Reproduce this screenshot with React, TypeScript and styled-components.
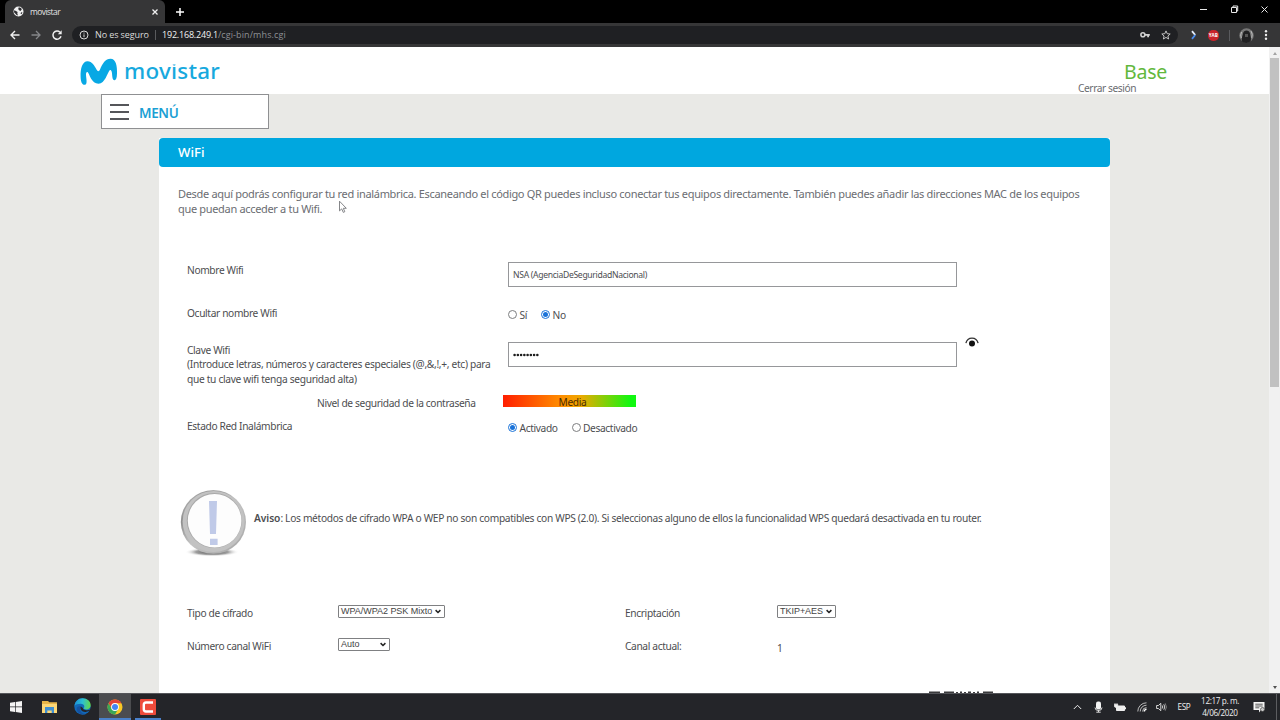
import React from 'react';
import styled, { createGlobalStyle } from 'styled-components';

const GlobalStyle = createGlobalStyle`
  * { box-sizing: border-box; }
  body { margin: 0; overflow: hidden; background: #000; }
`;

const uiFont = `'Open Sans', 'Noto Sans', sans-serif`;
const siteFont = `'Noto Sans', 'Open Sans', sans-serif`;

const Screen = styled.div`
  position: relative;
  width: 1280px;
  height: 720px;
  display: flex;
  flex-direction: column;
  overflow: hidden;
  font-family: ${siteFont};
`;

/* ---------- browser chrome ---------- */
const TabStrip = styled.div`
  height: 23px;
  flex: none;
  display: flex;
  align-items: center;
  padding-left: 5px;
  background: #000;
`;
const Tab = styled.div`
  width: 160px;
  height: 23px;
  display: flex;
  align-items: center;
  gap: 6px;
  padding: 0 6px 0 8px;
  border-radius: 6px 6px 0 0;
  background: #363637;
  color: #e4e4e4;
  font: 8.4px/12px ${uiFont};
  letter-spacing: -0.5px;
`;
const TabTitle = styled.span`
  flex: 1;
`;
const NewTab = styled.div`
  display: flex;
  margin-left: 9px;
`;
const WindowButtons = styled.div`
  margin-left: auto;
  display: flex;
  align-items: center;
  gap: 21px;
  padding: 0 11px 4px 0;
`;
const Toolbar = styled.div`
  height: 24px;
  flex: none;
  display: flex;
  align-items: center;
  background: #363637;
`;
const NavButtons = styled.div`
  width: 72px;
  display: flex;
  align-items: center;
  gap: 9px;
  padding-left: 9px;
`;
const AddressBar = styled.div`
  width: 1106px;
  height: 18px;
  display: flex;
  align-items: center;
  padding: 0 7px;
  border-radius: 9px;
  background: #1f2023;
  color: #dcdcdc;
  font: 9px/14px ${uiFont};
  svg { flex: none; }
`;
const Security = styled.span`
  width: 60px;
  margin-left: 6px;
  letter-spacing: -0.1px;
  white-space: nowrap;
`;
const Divider = styled.span<{ $h: number }>`
  width: 1px;
  height: ${(p) => p.$h}px;
  background: #5a5b5e;
`;
const Host = styled.span`
  margin-left: 6px;
  color: #f2f2f2;
  letter-spacing: -0.2px;
`;
const UrlPath = styled.span`
  flex: 1;
  color: #8e9094;
  letter-spacing: 0.1px;
`;
const BarIcons = styled.div`
  display: flex;
  gap: 11px;
  align-items: center;
`;
const Extensions = styled.div`
  flex: 1;
  display: flex;
  align-items: center;
  justify-content: space-between;
  padding: 0 12px 0 11px;
`;
const Blocker = styled.span`
  width: 11px;
  height: 11px;
  border-radius: 5px;
  background: #c9242b;
  color: #fff;
  font: bold 4.6px/11px ${uiFont};
  text-align: center;
`;

/* ---------- page ---------- */
const Viewport = styled.div`
  height: 646px;
  flex: none;
  display: flex;
  overflow: hidden;
`;
const Page = styled.div`
  width: 1269px;
  background: #e9e9e6;
`;
const Header = styled.header`
  height: 47px;
  display: flex;
  justify-content: space-between;
  padding: 0 102px 0 80px;
  background: #fff;
`;
const Brand = styled.div`
  display: flex;
  padding-top: 11px;
`;
/* The brand lettering has a dotless i: the strip above the t is clipped away. */
const Wordmark = styled.div`
  height: 30px;
  margin: -2px 0 0 6px;
  clip-path: inset(8.6px 0 0 0);
  color: #17a9de;
  font: 500 22.4px/30px ${siteFont};
  letter-spacing: 0.25px;
`;
const Account = styled.div`
  width: 89px;
  display: flex;
  flex-direction: column;
`;
const Level = styled.div`
  align-self: flex-end;
  margin-top: 12px;
  color: #62b83c;
  font-size: 19.5px;
  line-height: 26px;
  letter-spacing: -0.25px;
`;
const Logout = styled.a`
  margin-top: -4px;
  color: #6a6c70;
  font-size: 10.2px;
  line-height: 14px;
  letter-spacing: -0.42px;
`;
const MenuButton = styled.div`
  width: 168px;
  height: 35px;
  display: flex;
  align-items: center;
  gap: 10px;
  margin-left: 101px;
  padding: 3px 0 0 8px;
  border: 1px solid #8f9092;
  background: #fff;
  color: #1b9fd4;
  font-size: 13.5px;
  font-weight: 600;
  letter-spacing: -0.35px;
`;
const Bars = styled.span`
  width: 19px;
  height: 16px;
  margin-top: -2px;
  border: solid #55565a;
  border-width: 2px 0;
  display: flex;
  align-items: center;
  &::after { content: ''; width: 19px; height: 2px; background: #55565a; }
`;
const Card = styled.main`
  width: 951px;
  height: 555px;
  margin: 8.5px 0 0 159px;
  background: #fff;
`;
const CardTitle = styled.h1`
  height: 29px;
  margin: 0;
  padding-left: 19px;
  border-radius: 4px;
  background: #00a7df;
  color: #fff;
  font-size: 13.2px;
  font-weight: 500;
  line-height: 29px;
`;
const CardBody = styled.div`
  padding-left: 28px;
  color: #4c4d50;
  font-size: 10.2px;
  line-height: 14.6px;
  letter-spacing: -0.36px;
`;
const Intro = styled.p`
  margin: 0 0 0 -9px;
  padding-top: 20.5px;
  height: 50px;
  white-space: nowrap;
  color: #6b6d72;
  font-size: 11px;
  line-height: 14.7px;
  letter-spacing: -0.325px;
`;
const Row = styled.div<{ $gap: number; $h: number }>`
  display: flex;
  height: ${(p) => p.$h}px;
  margin-top: ${(p) => p.$gap}px;
`;
const Label = styled.div<{ $w?: number; $top?: number; $indent?: number }>`
  flex: none;
  width: ${(p) => p.$w ?? 321}px;
  padding: ${(p) => p.$top ?? 0}px 0 0 ${(p) => p.$indent ?? 0}px;
  white-space: nowrap;
`;
const Hint = styled.div`
  letter-spacing: -0.31px;
`;
const TextField = styled.div`
  width: 449px;
  height: 25px;
  padding: 0 0 1px 4px;
  border: 1px solid #96979a;
  font-size: 8.6px;
  line-height: 24px;
  letter-spacing: -0.31px;
`;
const Password = styled.div`
  display: flex;
  align-items: center;
  gap: 0.7px;
  height: 23px;
`;
const DotRow = styled.svg`
  display: block;
`;
const EyeButton = styled.span`
  margin: -5px 0 0 8px;
`;
const RadioGroup = styled.div`
  display: flex;
  align-items: center;
  height: 21px;
`;
const RadioOption = styled.label<{ $w: number }>`
  width: ${(p) => p.$w}px;
  display: flex;
  align-items: center;
  gap: 2.5px;
  white-space: nowrap;
`;
const Radio = styled.span<{ $on?: boolean }>`
  flex: none;
  width: 9px;
  height: 9px;
  margin-top: -2px;
  border: 1px solid ${(p) => (p.$on ? '#1a73d9' : '#7d7e80')};
  border-radius: 50%;
  background: ${(p) => (p.$on ? '#1a73d9' : '#fff')};
  background-clip: content-box;
  padding: 1px;
`;
const Strength = styled.div`
  width: 133px;
  height: 12px;
  margin-top: 1px;
  padding-left: 6px;
  background: linear-gradient(90deg, #ff1e00, #ff8a00 42%, #f0a800 58%, #10f810 96%);
  color: #4a2c00;
  line-height: 14px;
  text-align: center;
`;
const Notice = styled.div`
  display: flex;
  height: 70px;
  margin: 52px 0 0 -7px;
  white-space: nowrap;
  letter-spacing: -0.315px;
`;
const NoticeText = styled.p`
  margin: 22px 0 0 8px;
`;
const Strong = styled.strong`
  letter-spacing: -0.05px;
  font-weight: 600;
`;
const SelectBox = styled.div<{ $w: number }>`
  width: ${(p) => p.$w}px;
  height: 13px;
  display: flex;
  align-items: center;
  justify-content: space-between;
  padding: 0 3px 0 2px;
  border: 1px solid #7f8082;
  border-radius: 1px;
  color: #444;
  font: 9px/11px 'Liberation Sans', Arial, sans-serif;
  letter-spacing: -0.03px;
  white-space: nowrap;
`;
const Cell = styled.div<{ $w: number }>`
  flex: none;
  width: ${(p) => p.$w}px;
`;
const Scrollbar = styled.div`
  width: 11px;
  display: flex;
  flex-direction: column;
  align-items: center;
  background: #f1f1f1;
`;
const Thumb = styled.div`
  width: 9px;
  height: 329px;
  margin-bottom: auto;
  background: #c1c1c1;
`;
const ScrollArrow = styled.span<{ $down?: boolean }>`
  display: block;
  margin: ${(p) => (p.$down ? '0 0 4px' : '5px 0 3px')};
  border: solid transparent;
  border-width: 0 2px;
  ${(p) => (p.$down ? 'border-top: 3px solid #505050;' : 'border-bottom: 3px solid #a3a3a3;')}
`;
const Pointer = styled.svg`
  position: absolute;
  left: 338px;
  top: 200px;
`;

/* ---------- taskbar ---------- */
const Taskbar = styled.footer`
  flex: 1;
  display: flex;
  border-top: 1px solid #55565a;
  background: #242529;
  color: #efefef;
  font: 8.2px/12.5px ${uiFont};
`;
const TaskButton = styled.div<{ $w: number; $active?: boolean; $open?: boolean }>`
  width: ${(p) => p.$w}px;
  display: flex;
  align-items: center;
  justify-content: center;
  padding-top: 1px;
  background: ${(p) => (p.$active ? '#4b4c4f' : 'transparent')};
  border-bottom: ${(p) => (p.$open ? '2px solid #4a80c9' : '2px solid transparent')};
`;
const Tray = styled.div`
  margin-left: auto;
  display: flex;
  align-items: center;
`;
const TrayItem = styled.span<{ $w: number }>`
  width: ${(p) => p.$w}px;
  display: flex;
  justify-content: center;
  letter-spacing: -0.4px;
`;
const Clock = styled.div`
  width: 44px;
  margin-right: 3px;
  text-align: center;
  letter-spacing: -0.38px;
  white-space: nowrap;
`;
const ShowDesktop = styled.div`
  width: 4px;
  height: 26px;
  margin-left: 4px;
  border-left: 1px solid #5c5d60;
`;

const Select = ({ w, children }: { w: number; children: React.ReactNode }) => (
  <SelectBox $w={w}>
    {children}
    <svg width="6" height="5" viewBox="0 0 6 5" fill="none" stroke="#222" strokeWidth="1.5">
      <path d="M.6 1.1 3 3.5 5.4 1.1" />
    </svg>
  </SelectBox>
);

const BrandMark = () => (
  <svg width="38" height="28" viewBox="80 58 38 28" fill="#08a8e4">
    <path d="M84.800 84.800C82 85 80.800 82 80.600 77 80.300 68 82.500 61.500 87.500 61.300 92 61.200 94.500 66 96.500 69.500 97.800 71.800 99 71.800 100 69.500 102.500 63.500 105.500 58.800 110.500 58.800 116 58.800 117.200 66 117 73.500 116.900 78 116 80.500 114.300 80.300 112.500 80 112.300 77 112 73.500 111.800 71 110.800 69.300 109.500 70.500 107.500 72.500 105 83.800 98.500 83.800 91.500 83.800 89.500 74 87.800 72.300 86.800 71.300 86 72.500 86 74.500 86 78 88 84.500 84.800 84.800Z" />
  </svg>
);

const WarningBadge = () => (
  <svg width="66" height="70" viewBox="180 489 66 70">
    <defs>
      <linearGradient id="ring" x1="0" y1="0" x2="1" y2="1">
        <stop offset="0" stopColor="#c9c9c9" />
        <stop offset=".25" stopColor="#8f8f8f" />
        <stop offset=".5" stopColor="#c4c4c4" />
        <stop offset="1" stopColor="#a4a4a4" />
      </linearGradient>
      <radialGradient id="shade">
        <stop offset="0" stopColor="#444" />
        <stop offset=".6" stopColor="#777" stopOpacity=".7" />
        <stop offset="1" stopColor="#fff" stopOpacity="0" />
      </radialGradient>
    </defs>
    <ellipse cx="212" cy="552" rx="27" ry="4.5" fill="url(#shade)" />
    <ellipse cx="213.4" cy="522" rx="32.6" ry="31.8" fill="url(#ring)" />
    <ellipse cx="213.6" cy="521.500" rx="31" ry="30.500" fill="#c2c2c2" />
    <circle cx="214.3" cy="520.5" r="27.500" fill="#a9a9a9" />
    <circle cx="214.6" cy="520.7" r="26.800" fill="#fdfdfd" />
    <path d="M209 501h8l-1 33h-6zM210 538.7h7.6v6.3H210z" fill="#c0cae8" />
  </svg>
);

export default function App() {
  return (
    <Screen>
      <GlobalStyle />
      <TabStrip>
        <Tab>
          <svg width="11" height="11" viewBox="0 0 11 11">
            <circle cx="5.5" cy="5.5" r="5" fill="#f1f1f1" />
            <path d="M1.2 4.2 3 5l1.6 1-.3 1.4L5 9.6 3.6 9 1 6.2zM5.8 1.3 8 2l.8 1.2L7.6 5 6 4.3l-.8-1.2zM8.2 6.2l1.3.3-1 1.8-1-.7z" fill="#303033" />
          </svg>
          <TabTitle>movistar</TabTitle>
          <svg width="8" height="8" viewBox="0 0 8 8" stroke="#f0f0f0" strokeWidth="1.3"><path d="m1.5 1.5 5 5m0-5-5 5" /></svg>
        </Tab>
        <NewTab>
          <svg width="12" height="10" viewBox="0 0 12 10" stroke="#fff" strokeWidth="1.5"><path d="M6 1v8M2 5h8" /></svg>
        </NewTab>
        <WindowButtons>
          <svg width="12" height="9" viewBox="0 0 12 9" stroke="#e8e8e8"><path d="M3 4.5h7" /></svg>
          <svg width="9" height="9" viewBox="0 0 9 9" fill="none" stroke="#e8e8e8"><path d="M1.5 2.5h5v5h-5zM3 2.5V1h4.7v5H6.5" /></svg>
          <svg width="9" height="9" viewBox="0 0 9 9" stroke="#e8e8e8"><path d="m1.5 1.5 6 6m0-6-6 6" /></svg>
        </WindowButtons>
      </TabStrip>
      <Toolbar>
        <NavButtons>
          <svg width="12" height="12" viewBox="0 0 12 12" fill="none" stroke="#f0f0f0" strokeWidth="1.4"><path d="M10.5 6H2m4-4L2 6l4 4" /></svg>
          <svg width="12" height="12" viewBox="0 0 12 12" fill="none" stroke="#858689" strokeWidth="1.3"><path d="M1.5 6H10M6 2l4 4-4 4" /></svg>
          <svg width="12" height="12" viewBox="0 0 12 12" fill="none" stroke="#f0f0f0" strokeWidth="1.5"><path d="M10 7.3A4.1 4.1 0 1 1 9 3.2" /><path d="M10.7 1.2v4H6.8z" fill="#f0f0f0" stroke="none" /></svg>
        </NavButtons>
        <AddressBar>
          <svg width="10" height="10" viewBox="0 0 10 10" fill="none" stroke="#d8d8d8"><circle cx="5" cy="5" r="4" /><path d="M5 4.4v2.8M5 2.6v1" /></svg>
          <Security>No es seguro</Security>
          <Divider $h={10} />
          <Host>192.168.249.1</Host>
          <UrlPath>/cgi-bin/mhs.cgi</UrlPath>
          <BarIcons>
            <svg width="10" height="8" viewBox="0 0 10 8"><circle cx="2.9" cy="3.8" r="2" fill="none" stroke="#d0d0d0" strokeWidth="1.6" /><path d="M5 3h4.8v1.7H9v1.5H7.2V4.7H5z" fill="#d0d0d0" /></svg>
            <svg width="10" height="10" viewBox="0 0 10 10" fill="none" stroke="#d0d0d0" strokeWidth=".9"><path d="m5 .9 1.2 2.8 3 .3-2.3 2 .7 3L5 7.4 2.4 9l.7-3L.8 4l3-.3z" /></svg>
          </BarIcons>
        </AddressBar>
        <Extensions>
          <svg width="9" height="10" viewBox="0 0 9 10" fill="none" strokeWidth="1.8"><path d="M3 1.2 6.2 5" stroke="#e8f0fc" /><path d="M6.2 5 3 8.8" stroke="#4a8df0" /></svg>
          <Blocker>YAB</Blocker>
          <Divider $h={11} />
          <svg width="15" height="15" viewBox="0 0 15 15"><circle cx="7.5" cy="7.5" r="7.2" fill="#777" /><path d="M3 13.5C2 9 4 8 4 5.5 4.5 1.5 10.5 1.5 11 5.5c.3 2.5 1.6 4 .6 7.8A7.2 7.2 0 0 1 3 13.5z" fill="#202022" /><path d="M12 3q2 3 .7 6.8M2.6 4Q1 7 2.3 10" stroke="#bbb" fill="none" /><path d="M6 6h3v3H6z" fill="#555" /></svg>
          <svg width="4" height="12" viewBox="0 0 4 12" fill="#eee"><circle cx="2" cy="2.2" r="1.2" /><circle cx="2" cy="6" r="1.2" /><circle cx="2" cy="9.8" r="1.2" /></svg>
        </Extensions>
      </Toolbar>

      <Viewport>
        <Page>
          <Header>
            <Brand>
              <BrandMark />
              <Wordmark>movistar</Wordmark>
            </Brand>
            <Account>
              <Level>Base</Level>
              <Logout>Cerrar sesión</Logout>
            </Account>
          </Header>
          <MenuButton><Bars />MENÚ</MenuButton>
          <Card>
            <CardTitle>WiFi</CardTitle>
            <CardBody>
              <Intro>
                Desde aquí podrás configurar tu red inalámbrica. Escaneando el código QR puedes incluso conectar tus equipos directamente. También puedes añadir las direcciones MAC de los equipos
                <br />
                que puedan acceder a tu Wifi.
              </Intro>
              <Row $gap={45.5} $h={25}>
                <Label $top={1}>Nombre Wifi</Label>
                <TextField>NSA (AgenciaDeSeguridadNacional)</TextField>
              </Row>
              <Row $gap={18} $h={19}>
                <Label $top={1}>Ocultar nombre Wifi</Label>
                <RadioGroup>
                  <RadioOption $w={33}><Radio />Sí</RadioOption>
                  <RadioOption $w={40}><Radio $on />No</RadioOption>
                </RadioGroup>
              </Row>
              <Row $gap={18} $h={45}>
                <Label $top={0.8}>
                  Clave Wifi
                  <Hint>(Introduce letras, números y caracteres especiales (@,&amp;,!,+, etc) para<br />que tu clave wifi tenga seguridad alta)</Hint>
                </Label>
                <TextField>
                  <Password>
                    <DotRow width="26" height="4" viewBox="0 0 26 4" fill="#1c1c1c">
                      {Array.from({ length: 8 }, (_, i) => <circle key={i} cx={1.6 + i * 3.25} cy="2" r="1.3" />)}
                    </DotRow>
                  </Password>
                </TextField>
                <EyeButton>
                  <svg width="14" height="11" viewBox="0 0 14 11"><path d="M.9 6.2C2.5-.6 11.5-.6 13.1 6.2" fill="none" stroke="#333" strokeWidth="1.3" /><circle cx="7" cy="6.6" r="3" fill="#111" /></svg>
                </EyeButton>
              </Row>
              <Row $gap={7} $h={15}>
                <Label $w={316} $indent={130} $top={2}>Nivel de seguridad de la contraseña</Label>
                <Strength>Media</Strength>
              </Row>
              <Row $gap={9} $h={19}>
                <Label $top={1}>Estado Red Inalámbrica</Label>
                <RadioGroup>
                  <RadioOption $w={63.5}><Radio $on />Activado</RadioOption>
                  <RadioOption $w={70}><Radio />Desactivado</RadioOption>
                </RadioGroup>
              </Row>
              <Notice>
                <WarningBadge />
                <NoticeText>
                  <Strong>Aviso</Strong>: Los métodos de cifrado WPA o WEP no son compatibles con WPS (2.0). Si seleccionas alguno de ellos la funcionalidad WPS quedará desactivada en tu router.
                </NoticeText>
              </Notice>
              <Row $gap={46} $h={16}>
                <Label $w={151} $top={1}>Tipo de cifrado</Label>
                <Cell $w={287}><Select w={107}>WPA/WPA2 PSK Mixto</Select></Cell>
                <Label $w={152} $top={1}>Encriptación</Label>
                <Select w={59}>TKIP+AES</Select>
              </Row>
              <Row $gap={17} $h={17}>
                <Label $w={151} $top={1}>Número canal WiFi</Label>
                <Cell $w={287}><Select w={52}>Auto</Select></Cell>
                <Label $w={152} $top={1}>Canal actual:</Label>
                <Label $w={20} $top={3}>1</Label>
              </Row>
              <Row $gap={36} $h={3}>
                <Cell $w={741} />
                <svg width="68" height="2" viewBox="0 0 68 2" fill="#3a3a3c"><path d="M1 .5h11V2H1zM16 .5h10V2H16zM28 1h2v1h-2zM32 .5h2V2h-2zM36 1h2v1h-2zM40 .5h3V2h-3zM45 1h2v1h-2zM49 .5h2V2h-2zM55 .5h10V2H55z" /></svg>
              </Row>
            </CardBody>
          </Card>
        </Page>
        <Scrollbar>
          <ScrollArrow />
          <Thumb />
          <ScrollArrow $down />
        </Scrollbar>
      </Viewport>

      <Taskbar>
        <TaskButton $w={32}>
          <svg width="12" height="12" viewBox="0 0 12 12" fill="#f4f4f4"><path d="M0 1.8 5 1v4.6H0zM5.7.9 12 0v5.6H5.7zM0 6.3h5V11l-5-.8zM5.7 6.3H12V12l-6.300-.9z" /></svg>
        </TaskButton>
        <TaskButton $w={34}>
          <svg width="15" height="14" viewBox="0 0 15 14"><path d="M0 1h6l1.3 1.2H15V13H0z" fill="#e7b549" /><path d="M0 4h15v9H0z" fill="#fbd777" /><path d="M3 7h9v6h-2.3v-2.6H5.3V13H3z" fill="#3f8fd2" /></svg>
        </TaskButton>
        <TaskButton $w={33}>
          <svg width="17" height="17" viewBox="0 0 17 17">
            <defs><linearGradient id="edge" x1="0" y1=".3" x2="1" y2=".4"><stop offset="0" stopColor="#1b8fd8" /><stop offset=".5" stopColor="#2cc0d0" /><stop offset="1" stopColor="#62d84c" /></linearGradient></defs>
            <circle cx="8.5" cy="8.5" r="8.2" fill="#1268b8" />
            <path d="M.4 8C1 3.500 4.300.3 8.500.3c4.700 0 8.200 3.200 8.200 7 0 2.700-2 4.200-4.200 4.200-1.800 0-2.800-.6-2.800-1.200 0-.5.6-.9.600-1.900 0-1.600-1.500-2.700-3.600-2.700C4 5.700 1.500 6.500.4 8z" fill="url(#edge)" />
            <path d="M6.600 8.300C5.500 12 9 14.600 12.500 13.700c1.300-.3 2.300-.8 3-1.200l.6.8L12 17l5-2V11.500c-1.500.6-3 .9-4.500.8-2.300-.1-3.700-1-3.600-2.300z" fill="#242529" />
            <path d="M6.500 8.300C4.500 12 8 16.500 12 15.900 8 17.600 2.500 15 2.700 10.800 2.800 8.500 4.500 7.800 6.500 8.300z" fill="#1552a0" />
          </svg>
        </TaskButton>
        <TaskButton $w={32} $active $open>
          <svg width="16" height="16" viewBox="0 0 16 16"><circle cx="8" cy="8" r="7.500" fill="#f9c825" /><path d="M1.500 4.250A7.500 7.500 0 0 1 14.500 4.250L8 4.300 4.700 9.800z" fill="#e2453a" /><path d="M1.500 4.250A7.500 7.500 0 0 0 8 15.500L11.300 9.800 4.700 9.800z" fill="#3ba757" /><circle cx="8" cy="8" r="3.900" fill="#fff" /><circle cx="8" cy="8" r="3" fill="#4285f4" /></svg>
        </TaskButton>
        <TaskButton $w={4} />
        <TaskButton $w={26} $open>
          <svg width="16" height="16" viewBox="0 0 16 16"><rect width="16" height="16" rx="1" fill="#ee4b3b" /><path d="M13 3.500H6Q3.800 3.500 3.800 5.700V10.300Q3.800 12.500 6 12.500H13" fill="none" stroke="#fff" strokeWidth="2.400" /></svg>
        </TaskButton>
        <Tray>
          <TrayItem $w={21}><svg width="9" height="6" viewBox="0 0 9 6" fill="none" stroke="#eee"><path d="m.8 5 3.700-3.700L8.200 5" /></svg></TrayItem>
          <TrayItem $w={21}><svg width="9" height="12" viewBox="0 0 9 12"><rect x="2" y=".5" width="5" height="8" rx="2" fill="#f4f4f4" /><path d="M1 6.500q0 3 3.500 3T8 6.500M4.500 9v2M2.300 11.200h4.400" fill="none" stroke="#ddd" /></svg></TrayItem>
          <TrayItem $w={22}><svg width="12" height="9" viewBox="0 0 12 9"><path d="M2.500 3h8v4.500h-8z" fill="#eee" stroke="#eee" /><path d="M11 4.200h1v2h-1z" fill="#eee" /><path d="M.2 1.300h3.600v2.200L2 4.700.2 3.500zM1 0v1.500M3 0v1.500" fill="#eee" stroke="#eee" strokeWidth=".6" /></svg></TrayItem>
          <TrayItem $w={22}><svg width="10" height="10" viewBox="0 0 10 10" fill="none" stroke="#bbb" strokeWidth="1"><path d="M.8 9.500A8.700 8.700 0 0 1 9.500.8M3.200 9.500A6.300 6.300 0 0 1 9.500 3.200M5.600 9.500A3.900 3.900 0 0 1 9.500 5.600" /><path d="M7.300 9.500a2.200 2.200 0 0 1 2.200-2.200" stroke="#fff" strokeWidth="1.500" /></svg></TrayItem>
          <TrayItem $w={17}><svg width="11" height="10" viewBox="0 0 11 10" fill="none" stroke="#e8e8e8" strokeWidth=".9"><path d="M.6 3.500h1.800L4.800 1.300v7.400L2.400 6.500H.6zM6.300 3.500q1 1.500 0 3M7.800 2.300q2 2.700 0 5.400" /><path d="M9.200 1.300q2.500 3.700 0 7.400" stroke="#888" /></svg></TrayItem>
          <TrayItem $w={28}>ESP</TrayItem>
          <Clock>12:17 p. m.<br />4/06/2020</Clock>
          <TrayItem $w={27}><svg width="12" height="12" viewBox="0 0 12 12"><path d="M.5 1h11v8H8l-2 2.500V9H.5z" fill="#f4f4f4" /><path d="M2.300 3.200h7.400M2.300 5h7.400M2.300 6.800h4" stroke="#333" strokeWidth=".8" /><circle cx="9.500" cy="8.500" r="2" fill="#ccc" stroke="#333" strokeWidth=".6" /></svg></TrayItem>
          <ShowDesktop />
        </Tray>
      </Taskbar>

      <Pointer width="10" height="14" viewBox="0 0 10 14" fill="#fff" stroke="#77787c" strokeWidth=".9">
        <path d="M1.500 1.200v9.700l2.200-2 1.600 3.500 1.500-.7-1.500-3.400h3z" />
      </Pointer>
    </Screen>
  );
}
